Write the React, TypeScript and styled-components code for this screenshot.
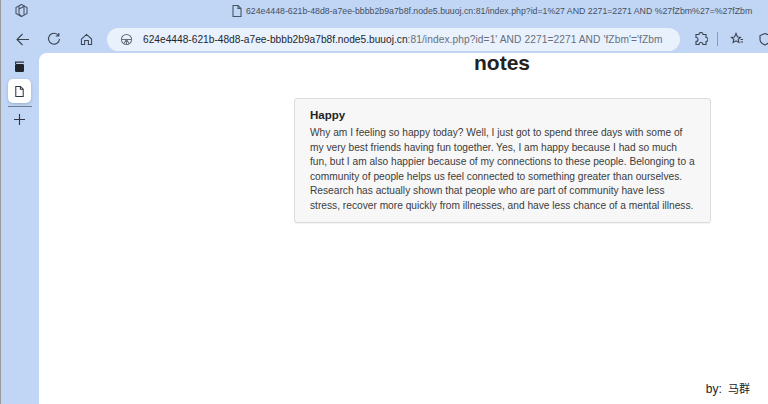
import React from 'react'
import styled, { createGlobalStyle } from 'styled-components'

const GlobalStyle = createGlobalStyle`
  html, body {
    margin: 0;
    padding: 0;
    height: 100%;
    overflow: hidden;
    background: #c1d6f4;
    font-family: "Liberation Sans", Arial, sans-serif;
  }
`

const Browser = styled.div`
  width: 768px;
  height: 404px;
  display: flex;
  flex-direction: column;
  background: #c1d6f4;
  overflow: hidden;
  border-left: 1px solid #9a9a9a;
  box-sizing: border-box;
`

const TitleBar = styled.div`
  height: 27px;
  flex: none;
  display: flex;
  align-items: center;
  padding: 0 0 6px 13px;
  box-sizing: border-box;
  color: #4a5568;
  white-space: nowrap;
`

const TitleText = styled.span`
  font-size: 8.75px;
  color: #46505f;
  margin-left: 2px;
`

const TitleCenter = styled.div`
  display: flex;
  align-items: center;
  margin-left: 201px;
`

const NavBar = styled.div`
  height: 26px;
  flex: none;
  display: flex;
  align-items: center;
  padding-bottom: 2px;
  box-sizing: border-box;
  white-space: nowrap;
`

const NavIcon = styled.span<{ $w: number; $ml?: number }>`
  width: ${(p) => p.$w}px;
  margin-left: ${(p) => p.$ml ?? 0}px;
  flex: none;
  display: flex;
  justify-content: center;
  color: #3a4350;
`

const AddressBar = styled.div`
  width: 573px;
  height: 23px;
  flex: none;
  background: #e9f1fc;
  border-radius: 12px;
  display: flex;
  align-items: center;
  padding-left: 13px;
  box-sizing: border-box;
  font-size: 10.2px;
  color: #66707c;
  overflow: hidden;

  svg {
    flex: none;
  }
`

const Host = styled.span`
  color: #23272e;
  margin-left: 10px;
`

const Query = styled.span`
  letter-spacing: 0.08px;
`

const ToolDivider = styled.span`
  width: 1px;
  height: 14px;
  background: #8c9bb0;
  flex: none;
`

const Body = styled.div`
  flex: 1;
  display: flex;
  min-height: 0;
`

const SideBar = styled.div`
  width: 38px;
  flex: none;
  display: flex;
  flex-direction: column;
  align-items: center;
  padding: 2px 1px 0 0;
  box-sizing: border-box;
  color: #2e3540;
`

const SideItem = styled.div<{ $active?: boolean }>`
  width: 23px;
  height: ${(p) => (p.$active ? '24px' : '23px')};
  margin-top: ${(p) => (p.$active ? '1px' : '0')};
  display: flex;
  align-items: center;
  justify-content: center;
  border-radius: 5px;
  background: ${(p) => (p.$active ? '#ffffff' : 'transparent')};
  box-shadow: ${(p) => (p.$active ? '0 1px 3px rgba(60,80,120,.3)' : 'none')};
`

const SideDivider = styled.div`
  width: 24px;
  height: 1px;
  background: #6f7c8e;
  margin-top: 3px;
  margin-bottom: 1px;
`

const Page = styled.main`
  flex: 1;
  background: #ffffff;
  border-top-left-radius: 8px;
  position: relative;
  display: flex;
  flex-direction: column;
  align-items: center;
  color: #222222;
`

const Heading = styled.h1`
  margin: -2px 0 0 197px;
  font-size: 21px;
  line-height: 24px;
  font-weight: 700;
  color: #222;
`

const Panel = styled.section`
  width: 417px;
  height: 125px;
  margin-top: 23px;
  margin-left: 198px;
  flex: none;
  box-sizing: border-box;
  background: #f7f7f7;
  border: 1px solid #dcdcdc;
  border-radius: 3px;
  box-shadow: 0 1px 1px rgba(0, 0, 0, 0.05);
  padding: 9px 15px;
`

const PanelTitle = styled.h4`
  margin: 0 0 4px;
  font-size: 11.5px;
  line-height: 14px;
  font-weight: 700;
  color: #1f2328;
`

const PanelText = styled.p`
  margin: 0;
  font-size: 10.2px;
  line-height: 14.6px;
  color: #3c3c3c;
  white-space: nowrap;
`

const Footer = styled.div`
  position: absolute;
  right: 18px;
  bottom: 8px;
  font-size: 11px;
  color: #222;
  font-family: "Liberation Sans", "Noto Sans CJK SC", sans-serif;
`

const FooterLabel = styled.span`
  font-size: 12px;
`

const stroke = { fill: 'none', stroke: 'currentColor', strokeWidth: 1.1 }

const DocIcon = ({ size = 14 }: { size?: number }) => (
  <svg width={size} height={size} viewBox="0 0 14 14" {...stroke}>
    <path d="M3 1.5h5l3 3v8H3z" />
    <path d="M8 1.5v3h3" />
  </svg>
)

const lines = [
  'Why am I feeling so happy today? Well, I just got to spend three days with some of',
  'my very best friends having fun together. Yes, I am happy because I had so much',
  'fun, but I am also happier because of my connections to these people. Belonging to a',
  'community of people helps us feel connected to something greater than ourselves.',
  'Research has actually shown that people who are part of community have less',
  'stress, recover more quickly from illnesses, and have less chance of a mental illness.',
]

export default function App() {
  return (
    <>
      <GlobalStyle />
      <Browser>
        <TitleBar>
          <svg width={15} height={15} viewBox="0 0 15 15" {...stroke}>
            <path d="M7.5 1.5l5.5 3v6l-5.5 3-5.5-3v-6z" />
            <path d="M5 3v8l2.5 2.5M5 6l5-2.5v8" />
          </svg>
          <TitleCenter>
            <DocIcon />
            <TitleText>624e4448-621b-48d8-a7ee-bbbb2b9a7b8f.node5.buuoj.cn:81/index.php?id=1%27 AND 2271=2271 AND %27fZbm%27=%27fZbm</TitleText>
          </TitleCenter>
        </TitleBar>
        <NavBar>
          <NavIcon $w={42}>
            <svg width={15} height={15} viewBox="0 0 15 15" {...stroke}>
              <path d="M14 7.5H2M7.5 2L2 7.5 7.5 13" />
            </svg>
          </NavIcon>
          <NavIcon $w={22}>
            <svg width={14} height={14} viewBox="0 0 14 14" {...stroke}>
              <path d="M11.5 3.5A5.5 5.5 0 1 0 12.5 7M11.8 1v3h-3" />
            </svg>
          </NavIcon>
          <NavIcon $w={42}>
            <svg width={13} height={13} viewBox="0 0 14 14" {...stroke}>
              <path d="M1.5 6.5L7 1.5l5.5 5V12.5H9V8H5v4.5H1.5z" />
            </svg>
          </NavIcon>
          <AddressBar>
            <svg width={13} height={13} viewBox="0 0 14 14" {...stroke}>
              <circle cx={7} cy={7} r={5.5} />
              <path d="M1.5 7h11M7 7v5.5M4 11.5L7 7l3 4.5" />
            </svg>
            <Host>624e4448-621b-48d8-a7ee-bbbb2b9a7b8f.node5.buuoj.cn</Host>
            <Query>:81/index.php?id=1' AND 2271=2271 AND 'fZbm'='fZbm</Query>
          </AddressBar>
          <NavIcon $w={32} $ml={5}>
            <svg width={14} height={14} viewBox="0 0 14 14" {...stroke}>
              <path d="M5 2.5a2 2 0 0 1 4 0h3v3a2 2 0 0 1 0 4v3H9a2 2 0 0 0-4 0H2V9.5a2 2 0 0 0 0-4v-3z" />
            </svg>
          </NavIcon>
          <ToolDivider />
          <NavIcon $w={38}>
            <svg width={14} height={14} viewBox="0 0 14 14" {...stroke}>
              <path d="M6 1.5l1.5 3.5 3 .3-2.3 2 .7 3.2L6 8.8 3.1 10.5l.7-3.2-2.3-2 3-.3zM10.5 7.5H13M10.5 10H13" />
            </svg>
          </NavIcon>
          <NavIcon $w={18}>
            <svg width={14} height={14} viewBox="0 0 14 14" {...stroke}>
              <path d="M7 1.5l5 2v4c0 3-2.5 4.5-5 5.5-2.5-1-5-2.5-5-5.5v-4z" />
            </svg>
          </NavIcon>
        </NavBar>
        <Body>
          <SideBar>
            <SideItem>
              <svg width={13} height={13} viewBox="0 0 13 13">
                <path d="M2 1.5h9v1.2H3.2V4H2z" fill="currentColor" />
                <rect x={2} y={4} width={9} height={8} rx={1.2} fill="#20252c" />
              </svg>
            </SideItem>
            <SideItem $active>
              <DocIcon size={13} />
            </SideItem>
            <SideDivider />
            <SideItem>
              <svg width={13} height={13} viewBox="0 0 13 13" {...stroke}>
                <path d="M6.5 1v11M1 6.5h11" />
              </svg>
            </SideItem>
          </SideBar>
          <Page>
            <Heading>notes</Heading>
            <Panel>
              <PanelTitle>Happy</PanelTitle>
              <PanelText>
                {lines.map((line) => (
                  <React.Fragment key={line}>
                    {line}
                    <br />
                  </React.Fragment>
                ))}
              </PanelText>
            </Panel>
            <Footer>
              <FooterLabel>by:</FooterLabel>&nbsp; 马群
            </Footer>
          </Page>
        </Body>
      </Browser>
    </>
  )
}
